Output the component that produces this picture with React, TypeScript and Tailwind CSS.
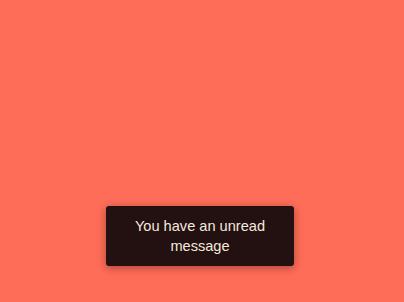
export default function App() {
  return (
    <div className="flex h-[302px] w-full items-end justify-center bg-[#fe6d58] pb-[36px] pr-[4px] font-['Liberation_Sans',Arial,sans-serif]">
      <div className="w-[188px] rounded-[3px] bg-[#231010] px-[12px] py-[10px] text-center text-[14.6px] leading-[20px] text-[#f3e9df] shadow-[0_2px_8px_rgba(0,0,0,0.35)]">
        You have an unread message
      </div>
    </div>
  );
}
